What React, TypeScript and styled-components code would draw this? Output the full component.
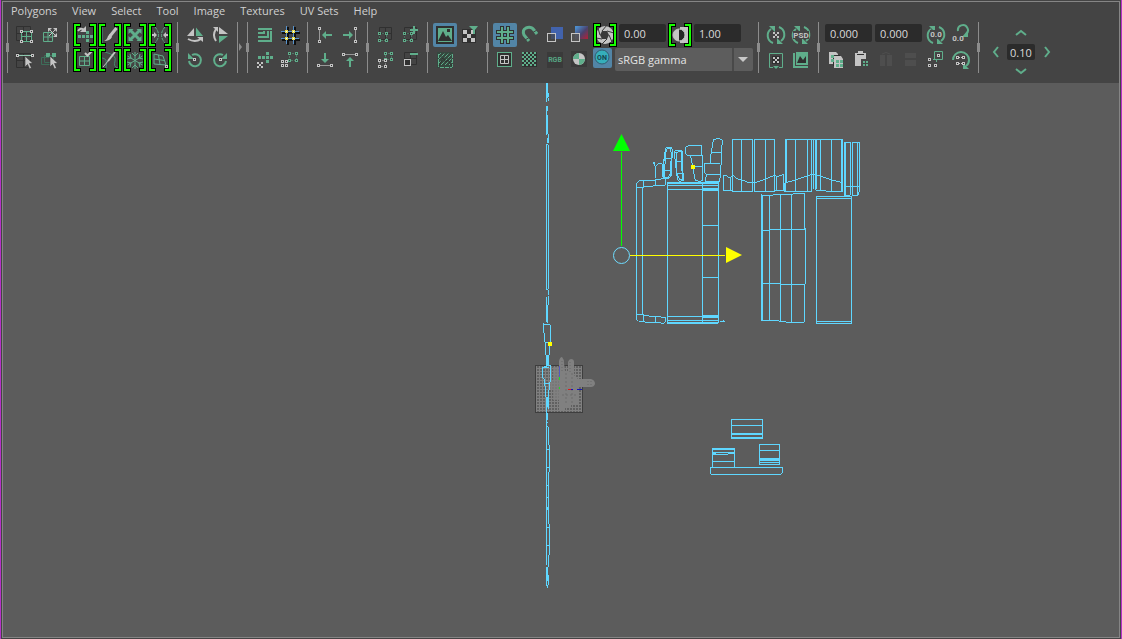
import React from "react";
import styled, { createGlobalStyle } from "styled-components";

const GREEN = "#5fae8b";
const LIGHT = "#c4c4c4";
const DARK = "#303030";
const WIRE = "#5fd7ff";

const GlobalStyle = createGlobalStyle`
  * { box-sizing: border-box; }
  body { margin: 0; background: #444444; }
  body, button, input, select { font-family: "Open Sans", "Noto Sans", sans-serif; font-size: 11px; }
`;

const Window = styled.div`
  min-height: 100vh;
  display: flex;
  background: #444444;
  border: solid #b632c8;
  border-width: 0 1px;
  padding: 1px;
`;

const Frame = styled.main`
  flex: 1;
  min-width: 0;
  display: flex;
  flex-direction: column;
  border: 1px solid #858585;
`;

const MenuBar = styled.nav`
  display: flex;
  align-items: flex-start;
  gap: 15px;
  height: 20px;
  padding-left: 8px;
`;

const MenuButton = styled.button`
  border: 0;
  padding: 0;
  background: none;
  color: #d0d0d0;
  line-height: 18px;
  white-space: nowrap;
`;

const Toolbar = styled.div`
  display: flex;
  height: 61px;
  padding-left: 4px;
`;

const Group = styled.section`
  position: relative;
  display: flex;
  height: 51px;
  padding: 1px 4px 0 5px;
  border-left: 1px solid #8c8c8c;
`;

const Handle = styled.i`
  position: absolute;
  left: -2px;
  top: 21px;
  width: 3px;
  height: 9px;
  background: #8c8c8c;
`;

const More = styled.i`
  position: absolute;
  left: 1px;
  top: 21px;
  border: solid transparent;
  border-width: 4px 0 4px 3px;
  border-left-color: #8c8c8c;
`;

const Tiles = styled.div<{ $cols: number }>`
  display: grid;
  grid-template-columns: repeat(${(p) => p.$cols}, 25px);
  grid-auto-rows: 25px;
`;

const Tool = styled.button<{ $on?: boolean }>`
  position: relative;
  width: 24px;
  height: 24px;
  padding: 0;
  border: 0;
  border-radius: 2px;
  background: ${(p) => (p.$on ? "#5285a6" : "none")};
  svg { display: block; }
`;

const Stack = styled.div`
  display: flex;
  flex-direction: column;
`;

const Row = styled.div`
  display: flex;
  height: 25px;
`;

const NumberField = styled.input`
  width: 47px;
  height: 18px;
  margin: 1px 2px 0 1px;
  padding: 0 0 0 5px;
  border: 0;
  border-radius: 2px;
  background: #2b2b2b;
  color: #dadada;
`;

const OnButton = styled(Tool)`
  height: 20px;
  width: 19px;
  margin-right: 3px;
`;

const SelectBox = styled.div`
  position: relative;
  display: flex;
  width: 138px;
  height: 23px;
  margin-right: 1px;
`;

const Select = styled.select`
  appearance: none;
  width: 100%;
  padding: 0 20px 0 3px;
  border: 0;
  border-radius: 2px;
  color: #e4e4e4;
  background: linear-gradient(90deg, #5d5d5d 117px, #494949 117px, #494949 119px, #5d5d5d 119px);
`;

const SelectArrow = styled.i`
  position: absolute;
  right: 5px;
  top: 9px;
  border: solid transparent;
  border-width: 5px 5px 0;
  border-top-color: #c8c8c8;
  pointer-events: none;
`;

const Nudge = styled.div`
  display: grid;
  grid-template-columns: 23px 28px 23px;
  grid-template-rows: 20px 16px 20px;
  row-gap: 1px;
  place-items: center;
`;

const NudgeButton = styled.button<{ $area: string }>`
  grid-area: ${(p) => p.$area};
  display: flex;
  padding: 0;
  border: 0;
  background: none;
`;

const NudgeValue = styled.input`
  grid-area: 2 / 2;
  width: 28px;
  height: 16px;
  padding: 0 0 0 3px;
  border: 0;
  border-radius: 2px;
  background: #2b2b2b;
  color: #dadada;
`;

const Canvas = styled.div`
  flex: 1;
  position: relative;
  min-height: 0;
  background: #5c5c5c;
`;

const Drawing = styled.svg`
  position: absolute;
  inset: 0;
  width: 100%;
  height: 100%;
`;

/* ---------- icon building blocks ---------- */

const Line = ({ d, c = GREEN, w = 1, dash }: { d: string; c?: string; w?: number; dash?: string }) => (
  <path d={d} fill="none" stroke={c} strokeWidth={w} strokeDasharray={dash} />
);

const Fill = ({ d, c = GREEN }: { d: string; c?: string }) => <path d={d} fill={c} />;

const Knobs = ({ at, c = LIGHT }: { at: number[][]; c?: string }) => (
  <>
    {at.map(([x, y]) => (
      <rect key={`${x}-${y}`} x={x - 0.5} y={y - 0.5} width="2" height="2" fill={DARK} stroke={c} />
    ))}
  </>
);

const Blocks = ({ at, c = GREEN, s = 3 }: { at: number[][]; c?: string; s?: number }) => (
  <>
    {at.map(([x, y]) => (
      <rect key={`${x}-${y}`} x={x} y={y} width={s} height={s} fill={c} />
    ))}
  </>
);

const checks = (x: number, y: number, n: number, s: number) => {
  const out: number[][] = [];
  for (let r = 0; r < n; r++) for (let k = 0; k < n; k++) if ((r + k) % 2 === 0) out.push([x + k * s, y + r * s]);
  return out;
};

const Brackets = () => (
  <g fill="none">
    <path d="M6 2H2V22H6M18 2H22V22H18" stroke="#000" strokeWidth="4" strokeLinecap="square" />
    <path d="M7 2H2V22H7M17 2H22V22H17" stroke="#17ff00" strokeWidth="2" />
  </g>
);

const Cursor = () => <path d="M12 8V19L14.500 16.500L16.500 21L18.500 20L16.500 15.500H20Z" fill={LIGHT} stroke={DARK} strokeWidth=".6" />;

const Cell = ({ x, y, c, s = 7 }: { x: number; y: number; c: string; s?: number }) => (
  <>
    <rect x={x + 0.5} y={y + 0.5} width={s} height={s} fill="none" stroke={c} strokeDasharray="1 2" />
    <Knobs c={c} at={[[x, y], [x + s, y], [x, y + s], [x + s, y + s]]} />
  </>
);

const Spin = ({ gap = false }: { gap?: boolean }) => (
  <>
    <Line w={2} d="M9 20A8 8 0 0 1 7 6M15 4A8 8 0 0 1 17 18" />
    <Fill d="M5 3H11V9ZM19 21H13V15Z" />
    {gap && <rect x="4" y="8" width="16" height="8" fill="#444" />}
  </>
);

const IconText = ({ x, y, children, c = LIGHT, s = 8 }: { x: number; y: number; children: string; c?: string; s?: number }) => (
  <text x={x} y={y} fill={c} fontSize={s} fontWeight="700" textAnchor="middle" fontFamily="Roboto, sans-serif">
    {children}
  </text>
);

const DarkGrid = ({ x = 3.5, y = 3.5, s = 14 }) => (
  <Line c={DARK} d={`M${x} ${y}h${s}v${s}h-${s}zM${x + s / 2} ${y}v${s}M${x} ${y + s / 2}h${s}`} />
);

const icons: Record<string, React.ReactNode> = {
  lattice: <><DarkGrid /><Line d="M8 8.500H18M8 18.500H18M8.500 8V18M18.500 8V18M13.500 9V18M9 13.500H18" /><Knobs at={[[8, 8], [18, 8], [8, 18], [18, 18]]} /></>,
  expand: <><Line d="M5.500 9.500h9v9h-9zM10 9.500v9M5.500 14h9" /><Line c={LIGHT} d="M11 6L18 13M18 6L11 13" /><Fill c={LIGHT} d="M10 5h4l-4 4zM19 5v4l-4-4zM19 14h-4l4-4z" /></>,
  edge: <><DarkGrid y={5.500} /><Line d="M6 7.500H18" c="#8dc8ae" /><Knobs at={[[4, 7], [19, 7]]} /><Cursor /></>,
  shell: <><Line c="#3d6d59" d="M3.500 9.500h9v7h-9zM6.500 7.500h9v7h-9z" /><Blocks at={[[8, 5], [14, 5]]} s={4} /><Cursor /></>,
  unfold: <><Blocks at={[[5, 12], [9, 12], [13, 12], [17, 12], [13, 8], [13, 16]]} /><Line c={LIGHT} w={2} d="M5 8Q8 4 11 7" /><Fill c={LIGHT} d="M7 9h6v-6z" /><Brackets /></>,
  brush: <><Line d="M4.500 4V20" c="#427560" /><Line d="M18.500 5L12 13" w={3} c={LIGHT} /><Fill c={LIGHT} d="M12 11L14 14Q12 18 6 18Q9 17 10 13Z" /><Brackets /></>,
  cross: <><Line d="M7 7L17 17M17 7L7 17" w={3} /><Fill d="M5.500 6h5l-5 5zM18.500 6v5l-5-5zM18.500 18h-5l5-5zM5.500 18v-5l5 5z" /><Brackets /></>,
  pinch: <><Line d="M7 4Q14 12 7 20M17 4Q10 12 17 20" dash="3 1" /><Line c={LIGHT} w={2} d="M3 12H8M16 12H21" /><Fill c={LIGHT} d="M6 9l3 3-3 3zM18 9l-3 3 3 3z" /><Brackets /></>,
  check: <><Line d="M6.500 8.500h10v9h-10zM11.500 8.500v9M6.500 13h10" /><Line c={LIGHT} w={2} d="M12 5L14.500 7.500L19 3" /><Brackets /></>,
  needle: <><Line d="M7 4Q19 7 17 13T20 20M4 10Q10 10 8 20" c="#438d6d" /><Line w={2} c={LIGHT} d="M17 4L10 13" /><Line c={LIGHT} d="M11 12L5 19" /><Brackets /></>,
  flake: <><Line d="M12 4V21M4.500 8L19.500 17M19.500 8L4.500 17M9 5l3 3 3-3M9 20l3-3 3 3M4 11l4-1-1-4M20 11l-4-1 1-4M4 14l4 1-1 4M20 14l-4 1 1 4" /><Brackets /></>,
  skew: <><Line d="M6 6L15 8L18 17L6 16ZM10.500 7L12 16.500M6 11L16.500 12.500" /><Brackets /><Knobs at={[[18, 18]]} /></>,
  flipH: <><Fill c={LIGHT} d="M4 13L11 5V13Z" /><Fill d="M13 13V4.500L20 13Z" /><Line w={2} c={LIGHT} d="M5 16Q12 20 18 16" /><Fill c={LIGHT} d="M14 14H20V19Z" /></>,
  flipV: <><Fill c={LIGHT} d="M11 4L20 11H11Z" /><Fill d="M11 13H20L11 20Z" /><Line w={2} c={LIGHT} d="M8 6Q4 12 8 18" /><Fill c={LIGHT} d="M5 4H10V9Z" /></>,
  ccw: <><Line w={2} d="M9 7A6 6 0 1 1 6 13" /><Fill d="M5 5v6h6z" /><Knobs at={[[11, 11]]} /></>,
  cw: <><Line w={2} d="M15 7A6 6 0 1 0 18 13" /><Fill d="M19 5v6h-6z" /><Knobs at={[[12, 11]]} /></>,
  nested: <Line w={2} d="M5 6H19M5 10H11V8M5 14H15V8M5 18H18V8" />,
  snap: <><Line w={2} c="#101010" d="M10 4V22M17 4V22M4 10H22M4 17H22" /><Line w={1} c="#5793cc" d="M8.500 3V21M15.500 3V21M3 8.500H21M3 15.500H21" />{[[7.5, 7.5], [14.5, 7.5], [7.5, 14.5], [14.5, 14.5]].map(([x, y]) => <rect key={`${x}-${y}`} x={x} y={y} width="2" height="2" fill="#fff" stroke="#e4db4e" />)}</>,
  unpack: <><Blocks at={[[5, 8], [9, 8], [13, 8], [17, 8], [13, 4], [13, 12]]} /><Blocks c={LIGHT} s={2} at={checks(4, 14, 3, 2)} /></>,
  distribute: <><Cell x={11} y={5} c={GREEN} /><Knobs at={[[4, 13], [8, 13], [4, 17], [8, 17]]} /></>,
  alignL: <><Line c="#999" d="M6.500 7V18" /><Knobs at={[[6, 5], [6, 18]]} /><Line w={2} d="M12 12H19" /><Fill d="M9 12L13 8V16Z" /></>,
  alignR: <><Line c="#999" d="M17.500 7V18" /><Knobs at={[[17, 5], [17, 18]]} /><Line w={2} d="M5 12H12" /><Fill d="M15 12L11 8V16Z" /></>,
  alignB: <><Line c="#999" d="M7 17.500H18" /><Knobs at={[[5, 17], [18, 17]]} /><Line w={2} d="M12 5V12" /><Fill d="M12 15L8 11H16Z" /></>,
  alignT: <><Line c="#999" d="M7 6.500H18" /><Knobs at={[[5, 6], [18, 6]]} /><Line w={2} d="M12 12V19" /><Fill d="M12 9L8 13H16Z" /></>,
  patch: <><DarkGrid x={6.500} y={4.500} s={12} /><Cell x={6} y={10} c={GREEN} /></>,
  patchAdd: <><DarkGrid x={6.500} y={4.500} s={12} /><Cell x={6} y={10} c={GREEN} /><Line w={2} d="M16 3V11M12 7H20" /></>,
  patchPair: <><Cell x={12} y={5} c={GREEN} s={6} /><Cell x={6} y={12} c={LIGHT} s={6} /></>,
  patchCut: <><DarkGrid x={6.500} y={4.500} s={12} /><rect x="6.500" y="11.500" width="6" height="6" fill={DARK} stroke={LIGHT} /><Line w={2} d="M12 6H20" /></>,
  image: <><rect x="3" y="3" width="18" height="18" fill={DARK} /><rect x="5" y="5" width="14" height="14" fill={GREEN} /><Fill c={DARK} d="M5 18L10 8L13 14L15 12L19 18ZM14 6h3v3h-3z" /></>,
  filter: <><rect x="4" y="6" width="14" height="14" fill={DARK} /><Blocks c={LIGHT} s={4} at={checks(5, 7, 3, 4)} /><Fill d="M11 3H20L17 7V11H15V7Z" /></>,
  hatch: <><rect x="4" y="4" width="16" height="16" fill="#35483f" /><Line d="M5 8L8 5M5 12L12 5M5 16L16 5M8 17L19 6M12 17L19 10M16 17L19 14M7 19.500H19M5.500 6V19M19.500 6V19" dash="4 1" /><Line c={DARK} d="M6 18L10 10L13 14L15 12L19 18" /></>,
  grid: <><Line c={DARK} w={4} d="M9 3V21M15 3V21M3 9H21M3 15H21" /><Line w={2} d="M9 4V20M15 4V20M4 9H20M4 15H20" /></>,
  magnet: <><Line w={3} d="M11 18L6 12Q4 7 8 5Q13 3 16 7L19 11" /><Line c="#444" d="M7 17L12 14M14 10L19 7" /></>,
  shade: <><rect x="8" y="4" width="12" height="12" fill="#4263ad" /><rect x="4.500" y="10.500" width="8" height="8" fill="#444" fillOpacity=".7" stroke={LIGHT} /></>,
  tint: <><defs><linearGradient id="tint" x2="1" y2="1"><stop offset=".1" stopColor="#4c8dcc" /><stop offset=".55" stopColor="#49426d" /><stop offset="1" stopColor="#b51f35" /></linearGradient></defs><rect x="7" y="3" width="13" height="13" fill="url(#tint)" /><rect x="3.500" y="10.500" width="8" height="8" fill="#555" fillOpacity=".8" stroke={LIGHT} /></>,
  aperture: <><circle cx="12" cy="12" r="9" fill={LIGHT} /><Fill c="#3a3a3a" d="M9 8H14L16 12L14 16H9L7 12Z" /><Line c="#3a3a3a" d="M9 8L14 2M14 8L21 10M16 12L19 19M14 16L9 21M9 16L3 15M7 12L5 5" /><Brackets /></>,
  contrast: <><rect x="12" y="4" width="8" height="16" fill={LIGHT} /><circle cx="11" cy="12" r="6" fill="#262626" stroke={LIGHT} /><Fill c={LIGHT} d="M11 6A6 6 0 0 0 11 18Z" /><Brackets /></>,
  window: <><rect x="4.500" y="4.500" width="14" height="14" fill={DARK} stroke={GREEN} /><Line c={LIGHT} d="M7.500 7.500h8v8h-8zM11.500 7.500v8M7.500 11.500h8" /></>,
  checker: <><rect x="4" y="4" width="15" height="15" fill={DARK} /><Blocks s={2} at={checks(4, 4, 7, 2)} /></>,
  rgb: <><rect x="4" y="4" width="16" height="16" fill="#3a3a3a" /><IconText x={12} y={14} c="#57a583" s={7}>RGB</IconText></>,
  ball: <><rect x="3" y="3" width="16" height="16" fill="#3a3a3a" /><circle cx="11" cy="11" r="6" fill={LIGHT} /><Fill d="M11 5A6 6 0 0 0 5 11H11ZM11 17A6 6 0 0 0 17 11H11Z" /></>,
  on: <><circle cx="9" cy="9" r="7" fill="#35afba" stroke="#315d70" /><IconText x={9} y={12} c="#17444d" s={7}>ON</IconText></>,
  refresh: <><Spin /><Blocks c={LIGHT} s={2} at={checks(9, 9, 3, 2)} /></>,
  psd: <><Spin gap /><IconText x={12} y={15}>PSD</IconText></>,
  bake: <><Line d="M9 19.500H5.500V5.500H18.500V19.500H15" /><rect x="8" y="8" width="8" height="8" fill={DARK} /><Blocks c={LIGHT} s={2} at={checks(9, 9, 3, 2)} /><Fill d="M9 18H15L12 21Z" /></>,
  album: <><Line w={2} d="M5 5V19H19" /><rect x="7" y="4" width="12" height="13" fill={GREEN} /><Fill c={DARK} d="M8 15L11 8L14 12L17 8V15Z" /></>,
  spinValue: <><Spin /><rect x="6" y="7" width="12" height="9" fill="#444" /><IconText x={12} y={14}>0.0</IconText></>,
  setValue: <><Line w={2} d="M9 8A5 5 0 1 1 17 11" /><Fill d="M19 7V14H13Z" /><IconText x={9} y={18}>0.0</IconText></>,
  copy: <><Fill c={LIGHT} d="M5 4H12L14 6V16H5Z" /><Fill c={LIGHT} d="M10 8H17L19 11V20H10Z" /><Line c={DARK} d="M9.500 18V7.500H16" /><Blocks at={[[7, 7], [7, 11], [12, 12], [16, 12], [12, 16], [16, 16]]} /></>,
  paste: <><Fill c={LIGHT} d="M6 5H9V3H14V5H17V18H6Z" /><Line c={DARK} d="M8 6.500H15" /><rect x="12" y="11" width="8" height="9" fill="#444" /><Blocks s={2} at={[[14, 13], [17, 13], [14, 16], [17, 16]]} /></>,
  splitV: <><Fill c="#4e4e4e" d="M6 7H11V18H6ZM13 7H18V18H13Z" /><Line c="#4e4e4e" d="M8 6Q12 3 16 6" /></>,
  splitH: <Fill c="#4e4e4e" d="M6 5H17V10H6ZM6 12H17V18H6Z" />,
  link: <><Line d="M10.500 3.500h8v8h-8z" /><Knobs at={[[14, 7], [5, 11], [5, 17], [11, 17]]} /><Line dash="2 2" d="M9 11.500H12.500V16" /></>,
  cycle: <><Line w={2} d="M4 12A8 8 0 0 1 20 12Q20 16 17 18" /><Fill d="M14 15V21H20Z" /><Knobs at={[[8, 9], [14, 9], [8, 15], [14, 15]]} /><Line c={LIGHT} dash="1 1" d="M10 9.500H14M10 15.500H14" /></>,
};

const leadingGroups = [
  { id: "select", cols: 2, tools: ["lattice", "expand", "edge", "shell"] },
  { id: "sculpt", cols: 4, tools: ["unfold", "brush", "cross", "pinch", "check", "needle", "flake", "skew"] },
  { id: "flip", cols: 2, tools: ["flipH", "flipV", "ccw", "cw"] },
];

const layoutGroups = [
  { id: "arrange", tools: ["nested", "snap", "unpack", "distribute"] },
  { id: "align", tools: ["alignL", "alignR", "alignB", "alignT"] },
  { id: "isolate", tools: ["patch", "patchAdd", "patchPair", "patchCut"] },
  { id: "image", tools: ["image", "filter", "hatch"] },
];

const active = ["image", "grid"];

const Glyph = ({ name }: { name: string }) => (
  <svg width="24" height="24" viewBox="0 0 24 24" aria-hidden="true">{icons[name]}</svg>
);

const ToolIcon = ({ name }: { name: string }) => (
  <Tool $on={active.includes(name)} aria-label={name} type="button"><Glyph name={name} /></Tool>
);

const ToolTiles = ({ cols, tools }: { cols: number; tools: string[] }) => (
  <Tiles $cols={cols}>{tools.map((t) => <ToolIcon key={t} name={t} />)}</Tiles>
);

const ToolGroup = ({ cols = 2, tools }: { cols?: number; tools: string[] }) => (
  <Group>
    <Handle />
    <ToolTiles cols={cols} tools={tools} />
  </Group>
);

const Chevron = ({ area, d, label }: { area: string; d: string; label: string }) => (
  <NudgeButton $area={area} aria-label={label} type="button">
    <svg width="12" height="12" viewBox="0 0 12 12"><Line w={2} d={d} /></svg>
  </NudgeButton>
);

/* ---------- UV shells ---------- */

const hand = [
  "M109 203V587M127 203V582M109 203H131M109 204H131M109 584H131",
  "M109 203V192L118 182H131V203M131 181H163L168 178L196 176V196H163L158 199H131M166 178V196",
  "M109 587V597L116 604H131V585M131 586H145L150 589H178L184 592H196V605L190 610L166 607H137L131 604M166 589V607",
  "M202 187H355V610H202ZM307 187V610M202 190H355M202 196H355M202 208H355M307 205H355M307 211H355M307 316H355M307 472H355M202 589H355M307 587H355M307 592H355M202 601H355M202 607H355M360 604H374M370 600V604",
  "M160 127L163 136L166 140V175M163 127V136M166 140L175 130H186L188 170",
  "M197 84L202 82H214L217 90L214 166L207 175H193L189 166L193 108ZM200 87H212L214 104L211 160L205 172H195L194 160L196 108ZM191 118L188 150L190 172H210L215 150M196 115H214M193 151H211",
  "M223 95L229 91H246L250 182L238 184L232 176L226 130ZM228 97L244 94L247 180L239 180L231 160ZM229 124H247M232 160H249",
  "M256 82L266 76H305V106H263L256 100ZM260 106L272 108L276 130L280 150L286 182L300 184L308 182V106M280 139H307",
  "M341 58L358 55L367 61L368 70L364 78V108L362 163L358 185H316L319 163L313 156V130H331V108L335 97L337 72ZM335 97H364M313 130H361M319 163H361",
  "M397 165V58H458V214H397V165M424 58V214M463 58H524V214H463ZM497 58V214",
  "M370 211V165L381 168L391 176L397 165L412 176L425 180L448 188H463L497 178L524 165L530 170L551 163V211H530V170M370 211H397M391 176V211M524 212H551",
  "M557 58V214M560 58V187M553 188V214H635M557 58H728V214H694L647 211V58M586 58V212M622 58V212M635 58V212M641 58V208M661 58V212M649 58V208M694 58V214M726 58V214M557 188L586 180L635 163H646L694 180L728 188",
  "M733 67H751V226H733ZM738 67V226M757 67H778V211L775 226H757V67M772 67V226M733 199H778",
  "M486 223V604M488 226V601M508 226V601M541 223V604M574 223V607M486 226H508L541 223H574L585 220H613V325H616V493H613V607H568L541 604L525 601H486M486 331H508V328H616M486 490H535L541 493H616",
  "M649 229H755V610H649ZM649 235H755M649 604H755",
];

const blocks = [
  "M124 43H218V100H124ZM124 61H218M124 85H218M124 88H218M124 97H218",
  "M208 118H269V178H208ZM208 136H269M208 160H269M208 163H269M208 166H269M208 172H269",
  "M67 187V130H134V187M67 133H134M67 143H134M67 146H78M114 146H134M67 149H114M67 169H134",
  "M64 187H278V202L274 208H64L61 204V187Z",
];

const strandTop = [
  "M139 9V65M142 9V54M145 39V50M145 55V63",
  "M139 78V165M142 78V92M142 105V162M145 162V188M142 174V188",
  "M139 195H145V627M139 195V627M139 630H145M145 630V645",
  "M139 650V725M145 648V674M142 675V715",
];

const strandBottom = [
  "M139 0V28M142 0V38M130 40V66L134 72L133 90L136 98V126L139 138V170M130 43H148L152 48V94L148 100V136L145 138V168M136 97H148M142 136V168",
  "M139 166L127 176V200L133 208V222L136 232V256L139 262V300M148 166H152V208L148 222L146 258V298M127 172H148M133 222H148M142 262V292",
  "M139 300V765M143 308V330M142 336L139 346L145 352M145 352V402L148 406V485L145 490V640L148 642V734L145 738V770M139 418H148M139 472H148M139 526H145M139 562H145M139 652H148M139 706H148M142 590V600",
  "M139 770V810L142 835M145 770L139 784L145 796V820L142 832M142 775V812",
];

const Shells = ({ paths, at }: { paths: string[]; at: string }) => (
  <g transform={`translate(${at}) scale(.33333)`} fill="none" stroke={WIRE} strokeWidth="3" shapeRendering="crispEdges">
    {paths.map((d) => <path key={d} d={d} />)}
  </g>
);

const Viewport = () => (
  <Canvas>
    <Drawing role="img" aria-label="UV layout">
      <defs>
        <pattern id="mesh" width="3" height="3" patternUnits="userSpaceOnUse">
          <rect width="3" height="3" fill="#808080" />
          <rect width="2" height="2" fill="#606060" />
        </pattern>
      </defs>
      <g transform="translate(-3 -83)">
        <rect x="535.500" y="365.500" width="47" height="47" fill="url(#mesh)" stroke="#3e3e3e" shapeRendering="crispEdges" />
        <g fill="#808080">
          <path d="M559 411V361Q560 357 562 357Q564 359 564 363L565 371H568V362Q569 359 571 359Q574 359 574 362V375L578 379H591Q595 380 595 384Q594 387 591 387H578V404H571V408H565V411Z" />
          <path d="M553 367H563V400H553ZM548 380H560V390H548Z" fillOpacity=".75" />
          <path d="M566 373V405M572 373V403M562 395H578" stroke="#6c6c6c" strokeDasharray="2 2" fill="none" />
          <path d="M562 361V372M570 362V373M588 381V386M591 381V386" stroke="#686868" strokeDasharray="1 2" fill="none" />
        </g>
        <g shapeRendering="crispEdges" strokeWidth="1">
          <path d="M559.500 366V377" stroke="#5558bd" />
          <path d="M559.500 377V380M559.500 387V389" stroke="#1ee01e" />
          <path d="M568 389.500H571" stroke="#e01818" />
          <path d="M571 389.500H573M577 389.500H582" stroke="#1414b8" />
        </g>
        <Shells paths={strandTop} at="500 80" />
        <Shells paths={strandBottom} at="500 310" />
        <Shells paths={hand} at="600 120" />
        <Shells paths={blocks} at="690 405" />
        <path d="M621.500 152V246" stroke="#00ff00" />
        <path d="M613 151L621.500 134L630 151Z" fill="#00ff00" />
        <path d="M630 255.500H725" stroke="#ffff00" />
        <path d="M726 247L742 255L726 263Z" fill="#ffff00" />
        <circle cx="621.500" cy="255.500" r="8" fill="none" stroke="#6fdcff" />
        <path d="M691 165h4v4h-4zM548 342h4v4h-4z" fill="#ffff00" />
      </g>
    </Drawing>
  </Canvas>
);

const menus = ["Polygons", "View", "Select", "Tool", "Image", "Textures", "UV Sets", "Help"];

export default function App() {
  return (
    <Window>
      <GlobalStyle />
      <Frame>
        <MenuBar>{menus.map((m) => <MenuButton key={m} type="button">{m}</MenuButton>)}</MenuBar>
        <Toolbar>
          {leadingGroups.map((g) => <ToolGroup key={g.id} cols={g.cols} tools={g.tools} />)}
          <Group><More /></Group>
          {layoutGroups.map((g) => <ToolGroup key={g.id} tools={g.tools} />)}
          <Group>
            <Handle />
            <Stack>
              <Row>
                <ToolTiles cols={5} tools={["grid", "magnet", "shade", "tint", "aperture"]} />
                <NumberField defaultValue="0.00" aria-label="Exposure" />
                <ToolTiles cols={1} tools={["contrast"]} />
                <NumberField defaultValue="1.00" aria-label="Contrast" />
              </Row>
              <Row>
                <ToolTiles cols={4} tools={["window", "checker", "rgb", "ball"]} />
                <OnButton $on type="button" aria-label="Color management"><Glyph name="on" /></OnButton>
                <SelectBox>
                  <Select aria-label="View transform" defaultValue="sRGB gamma"><option>sRGB gamma</option></Select>
                  <SelectArrow />
                </SelectBox>
              </Row>
            </Stack>
          </Group>
          <ToolGroup tools={["refresh", "psd", "bake", "album"]} />
          <Group>
            <Handle />
            <Stack>
              <Row>
                <NumberField defaultValue="0.000" aria-label="U" />
                <NumberField defaultValue="0.000" aria-label="V" />
                <ToolTiles cols={2} tools={["spinValue", "setValue"]} />
              </Row>
              <ToolTiles cols={6} tools={["copy", "paste", "splitV", "splitH", "link", "cycle"]} />
            </Stack>
          </Group>
          <Group>
            <Handle />
            <Nudge>
              <Chevron area="1 / 2" label="Up" d="M1 8L6 4L11 8" />
              <Chevron area="2 / 1" label="Left" d="M8 1L4 6L8 11" />
              <NudgeValue defaultValue="0.10" aria-label="Step" />
              <Chevron area="2 / 3" label="Right" d="M4 1L8 6L4 11" />
              <Chevron area="3 / 2" label="Down" d="M1 4L6 8L11 4" />
            </Nudge>
          </Group>
        </Toolbar>
        <Viewport />
      </Frame>
    </Window>
  );
}
